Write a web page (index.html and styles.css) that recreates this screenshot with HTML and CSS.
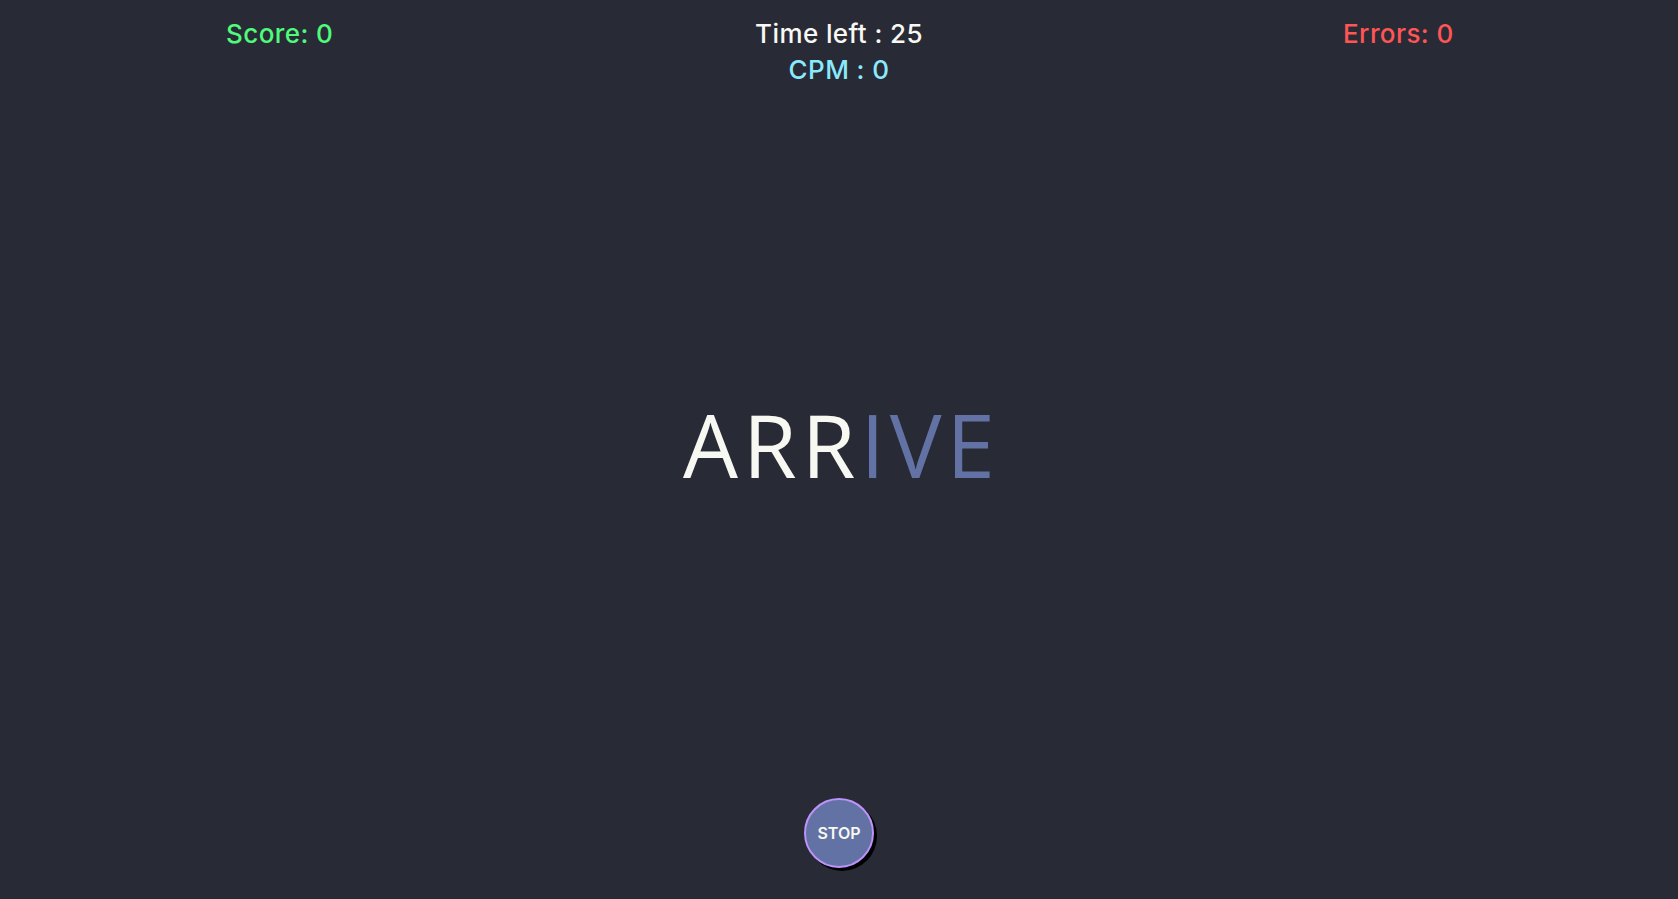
FILE: index.html
```html
<!DOCTYPE html>
<html lang="en">
<head>
<meta charset="utf-8">
<title>Typing game</title>
<link rel="stylesheet" href="styles.css">
</head>
<body>
<div class="app">
  <header class="stats">
    <div class="stat score">Score: 0</div>
    <div class="stat center">
      <div class="time">Time left : 25</div>
      <div class="cpm">CPM : 0</div>
    </div>
    <div class="stat errors">Errors: 0</div>
  </header>
  <main class="stage">
    <div class="word"><span class="typed">ARR</span><span class="rest">IVE</span></div>
  </main>
  <footer class="controls">
    <button class="stop">STOP</button>
  </footer>
</div>
</body>
</html>
```
FILE: styles.css
```css
html, body {
  margin: 0;
  padding: 0;
  height: 100%;
  background: #282a36;
}
.app {
  height: 100vh;
  display: flex;
  flex-direction: column;
  font-family: "Inter", "Noto Sans", sans-serif;
}
.stats {
  display: grid;
  grid-template-columns: 1fr 1fr 1fr;
  padding-top: 16px;
  font-size: 26px;
  font-weight: 500;
  line-height: 36px;
  letter-spacing: 0.4px;
  text-align: center;
}
.score { color: #50fa7b; }
.errors { color: #ff5555; }
.time { color: #f8f8f2; }
.cpm { color: #8be9fd; }
.stage {
  flex: 1;
  display: flex;
  align-items: center;
  justify-content: center;
}
.word {
  font-family: "Open Sans", sans-serif;
  font-size: 87px;
  letter-spacing: 5px;
  line-height: 1;
  padding-top: 2px;
  padding-left: 5px;
}
.typed { color: #f8f8f2; }
.rest { color: #6272a4; }
.controls {
  display: flex;
  justify-content: center;
  padding-bottom: 31px;
}
.stop {
  width: 70px;
  height: 70px;
  border-radius: 50%;
  border: 2px solid #bd93f9;
  background: #6272a4;
  color: #f8f8f2;
  font-family: "Inter", sans-serif;
  font-weight: 600;
  font-size: 16px;
  box-shadow: 3px 3px 0 #000;
  padding: 0;
}
```
